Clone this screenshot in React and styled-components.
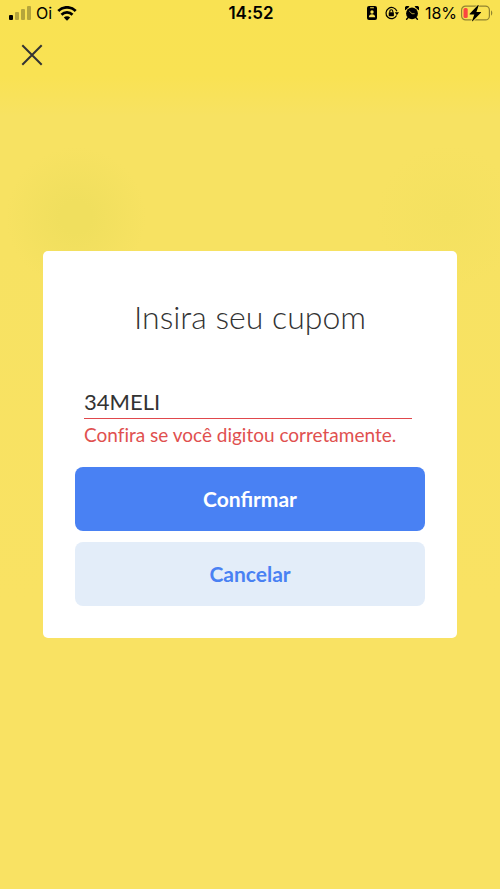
import React, { useState } from "react";
import styled, { createGlobalStyle, css } from "styled-components";

const GlobalStyle = createGlobalStyle`
  *, *::before, *::after { box-sizing: border-box; }
  body {
    margin: 0;
    background: #f9e262;
    color: #333333;
    font-family: Lato, "Open Sans", sans-serif;
    font-variant-ligatures: none;
  }
`;

const Screen = styled.div`
  min-height: 100vh;
  background:
    radial-gradient(circle at 76px 217px, #f0df5e 16px, rgba(240, 223, 94, 0) 70px),
    radial-gradient(circle at calc(100% - 52px) 217px, #f4e160, rgba(244, 225, 96, 0) 72px),
    linear-gradient(#f9e252 0, #f9e253 76px, #f7e262 116px, #f7e262 250px, #f9e263 600px);
`;

const StatusBar = styled.header`
  display: grid;
  grid-template-columns: 1fr auto 1fr;
  align-items: center;
  height: 26px;
  padding: 0 7px 0 9px;
  color: #000000;
  font-family: Inter, sans-serif;
  font-size: 16px;
  line-height: 20px;
`;

const StatusGroup = styled.div`
  display: flex;
  align-items: center;
  justify-content: ${({ $end }) => ($end ? "flex-end" : "flex-start")};
  gap: ${({ $gap }) => $gap}px;
`;

const Clock = styled.time`
  font-size: 17px;
  font-weight: 600;
`;

const StatusIcon = styled.svg`
  display: block;
  flex: none;
`;

const CloseButton = styled.button`
  display: grid;
  place-items: center;
  width: 40px;
  height: 40px;
  margin: 9px 12px;
  padding: 0;
  border: 0;
  background: none;
  color: #333333;
  cursor: pointer;
`;

const Overlay = styled.div`
  position: fixed;
  inset: 0;
  display: flex;
  align-items: center;
  justify-content: center;
  padding: 0 43px;
  pointer-events: none;
`;

const Dialog = styled.form`
  width: 100%;
  max-width: 480px;
  padding: 46px 32px 32px;
  border-radius: 5px;
  background: #ffffff;
  pointer-events: auto;
`;

const Title = styled.h1`
  margin: 0;
  font-size: 32px;
  font-weight: 300;
  line-height: 40px;
  text-align: center;
`;

const Field = styled.div`
  margin: 46px 13px 20px 9px;
`;

const CouponInput = styled.input`
  display: block;
  width: 100%;
  height: 36px;
  padding: 2px 0 0;
  border: 0;
  border-bottom: 1px solid #e0474c;
  border-radius: 0;
  outline: 0;
  background: none;
  color: #333333;
  font-family: inherit;
  font-size: 22px;
  line-height: 32px;
`;

const FieldError = styled.p`
  margin: 4px 0 0;
  color: #e0504f;
  font-size: 19px;
  line-height: 24px;
`;

const Actions = styled.div`
  display: flex;
  flex-direction: column;
  gap: 11px;
`;

const primary = css`
  background: #4981f3;
  color: #ffffff;
`;

const quiet = css`
  background: #e3edf9;
  color: #4981f3;
`;

const ActionButton = styled.button`
  height: 64px;
  padding: 0 16px;
  border: 0;
  border-radius: 8px;
  font-family: inherit;
  font-size: 21px;
  font-weight: 700;
  line-height: 24px;
  cursor: pointer;
  ${({ $variant }) => ($variant === "primary" ? primary : quiet)}
`;

function SignalIcon() {
  return (
    <StatusIcon width="22" height="14" viewBox="0 0 22 14" aria-hidden="true">
      <rect x="0" y="9" width="4" height="5" rx="1" />
      <g fillOpacity="0.27">
        <rect x="6" y="6" width="4" height="8" rx="1" />
        <rect x="12" y="3" width="4" height="11" rx="1" />
        <rect x="18" y="0" width="4" height="14" rx="1" />
      </g>
    </StatusIcon>
  );
}

function WifiIcon() {
  return (
    <StatusIcon width="20" height="15" viewBox="0 0 20 15" aria-hidden="true">
      <path d="M1.3 4.9a12.4 12.4 0 0 1 17.4 0" fill="none" stroke="#000" strokeWidth="2.8" />
      <path d="M4.5 8.7a7.7 7.7 0 0 1 11 0" fill="none" stroke="#000" strokeWidth="2.7" />
      <path d="M10 14.8 6.8 11.6a4.6 4.6 0 0 1 6.4 0Z" />
    </StatusIcon>
  );
}

function BadgeIcon() {
  return (
    <StatusIcon width="12" height="14" viewBox="0 0 12 14" aria-hidden="true">
      <rect width="10" height="14" rx="2" />
      <rect x="3" y="1.3" width="4" height="1" rx="0.5" fill="#f9e253" />
      <circle cx="5" cy="6" r="1.7" fill="#f9e253" />
      <path d="M1.8 11.3c0-2 1.4-3 3.2-3s3.2 1 3.2 3Z" fill="#f9e253" />
    </StatusIcon>
  );
}

function RotationLockIcon() {
  return (
    <StatusIcon width="14" height="14" viewBox="0 0 14 14" aria-hidden="true">
      <path d="M11.6 9.6A5.6 5.6 0 1 1 11.9 5.2" fill="none" stroke="#000" strokeWidth="1.2" />
      <path d="M9.8 6.2H14l-2.1 3Z" />
      <rect x="3.7" y="6.2" width="5.2" height="4" rx="0.6" />
      <path d="M4.8 6.5V5.3a1.5 1.5 0 0 1 3 0v1.2" fill="none" stroke="#000" strokeWidth="1.1" />
    </StatusIcon>
  );
}

function AlarmIcon() {
  return (
    <StatusIcon width="14" height="14" viewBox="0 0 14 14" aria-hidden="true">
      <circle cx="7" cy="7.4" r="5.9" />
      <path d="M.3 4.3A2.4 2.4 0 0 1 4.4.8Zm13.4 0A2.4 2.4 0 0 0 9.6.8Z" />
      <path d="m3.2 11.5-1.6 1.8m9.2-1.8 1.6 1.8" stroke="#000" strokeWidth="1.4" strokeLinecap="round" />
      <path d="M4.2 5 7 7.7h2.6" fill="none" stroke="#f9e253" strokeWidth="0.7" />
    </StatusIcon>
  );
}

function BatteryIcon() {
  return (
    <StatusIcon width="32" height="18" viewBox="0 0 32 18" aria-hidden="true">
      <rect x="0.6" y="2.1" width="27.8" height="13.8" rx="4" fill="none" stroke="#000" strokeOpacity="0.42" strokeWidth="1.2" />
      <path d="M30 6.5c1.7.6 1.7 4.4 0 5Z" fillOpacity="0.42" />
      <rect x="2.5" y="4" width="4.2" height="10" rx="1.6" fill="#fb4640" />
      <path
        d="M16.8 1.3 8.7 9.8c-.3.4-.1.8.4.8h4.2l-2.2 6.1c-.2.6.3.8.7.4l8.1-8.4c.4-.4.1-.8-.4-.8h-4.1l2.2-6.2c.2-.6-.4-.8-.8-.4Z"
        stroke="#f9e253"
        strokeWidth="1.6"
        paintOrder="stroke"
      />
    </StatusIcon>
  );
}

export default function App() {
  const [coupon, setCoupon] = useState("34MELI");

  return (
    <>
      <GlobalStyle />
      <Screen>
        <StatusBar>
          <StatusGroup $gap={5}>
            <SignalIcon />
            <span>Oi</span>
            <WifiIcon />
          </StatusGroup>
          <Clock dateTime="14:52">14:52</Clock>
          <StatusGroup $end $gap={6}>
            <BadgeIcon />
            <RotationLockIcon />
            <AlarmIcon />
            <StatusGroup $gap={4}>
              <span>18%</span>
              <BatteryIcon />
            </StatusGroup>
          </StatusGroup>
        </StatusBar>
        <CloseButton type="button" aria-label="Fechar">
          <svg width="22" height="22" viewBox="0 0 22 22" aria-hidden="true">
            <path d="m1.3 1.3 19.4 19.4m0-19.4L1.3 20.7" stroke="currentColor" strokeWidth="2" />
          </svg>
        </CloseButton>
        <Overlay>
          <Dialog
            role="dialog"
            aria-labelledby="coupon-title"
            onSubmit={(event) => event.preventDefault()}
          >
            <Title id="coupon-title">Insira seu cupom</Title>
            <Field>
              <CouponInput
                type="text"
                aria-labelledby="coupon-title"
                aria-describedby="coupon-error"
                aria-invalid="true"
                value={coupon}
                onChange={(event) => setCoupon(event.target.value)}
              />
              <FieldError id="coupon-error">Confira se você digitou corretamente.</FieldError>
            </Field>
            <Actions>
              <ActionButton type="submit" $variant="primary">Confirmar</ActionButton>
              <ActionButton type="button" $variant="quiet">Cancelar</ActionButton>
            </Actions>
          </Dialog>
        </Overlay>
      </Screen>
    </>
  );
}
